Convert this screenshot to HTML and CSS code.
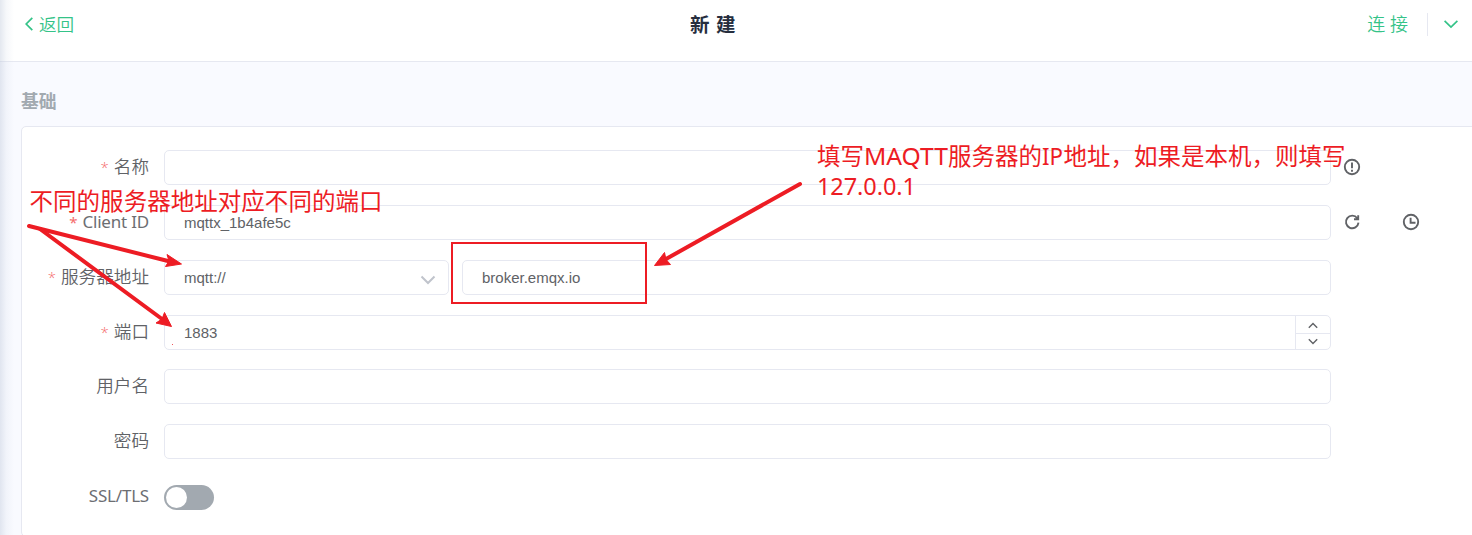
FILE: index.html
```
<!DOCTYPE html>
<html lang="zh-CN">
<head>
<meta charset="utf-8">
<title>新建</title>
<link rel="stylesheet" href="styles.css">
</head>
<body>
<div class="page">
  <header class="topbar">
    <a class="back"><svg width="10" height="16" viewBox="0 0 10 16"><path d="M8.3 1.8 2.2 8l6.1 6.2"/></svg><span>返回</span></a>
    <h1 class="title">新 建</h1>
    <div class="actions">
      <a class="connect">连 接</a>
      <span class="divider"></span>
      <svg width="16" height="10" viewBox="0 0 16 10"><path d="M1.6 1.8 8 8l6.4-6.2"/></svg>
    </div>
  </header>
  <main class="content">
    <h2 class="section">基础</h2>
    <form class="card">
      <div class="row">
        <label class="label required">名称</label>
        <div class="field"></div>
        <svg class="icon" width="18" height="18" viewBox="0 0 18 18"><circle cx="9" cy="9" r="7.2"/><path d="M9 4.500v5.800M9 11.800v1.900"/></svg>
      </div>
      <div class="row">
        <label class="label required latin">Client ID</label>
        <div class="field">mqttx_1b4afe5c</div>
        <svg class="icon" width="18" height="18" viewBox="0 0 18 18"><path d="M14.300 5.200A6.300 6.300 0 1 0 15.500 9.700M15.200 2.200v4h-4.200"/></svg>
        <svg class="icon clock" width="18" height="18" viewBox="0 0 18 18"><circle cx="9" cy="9" r="7.2"/><path d="M8.600 4.800v4.900h4.900"/></svg>
      </div>
      <div class="row">
        <label class="label required">服务器地址</label>
        <div class="field select"><span>mqtt://</span><svg width="16" height="10" viewBox="0 0 16 10"><path d="M1.500 1.500 8 8l6.500-6.500"/></svg></div>
        <div class="field host">broker.emqx.io</div>
      </div>
      <div class="row">
        <label class="label required">端口</label>
        <div class="field number"><span>1883</span>
          <div class="stepper">
            <div class="step"><svg width="10" height="7" viewBox="0 0 10 7"><path d="M.8 5.700 5 1.500l4.200 4.200"/></svg></div>
            <div class="step"><svg width="10" height="7" viewBox="0 0 10 7"><path d="M.8 1.200 5 5.400l4.200-4.200"/></svg></div>
          </div>
        </div>
      </div>
      <div class="row tight">
        <label class="label">用户名</label>
        <div class="field"></div>
      </div>
      <div class="row">
        <label class="label">密码</label>
        <div class="field"></div>
      </div>
      <div class="row">
        <label class="label latin">SSL/TLS</label>
        <div class="switch"><span class="knob"></span></div>
      </div>
    </form>
  </main>
  <div class="edge"></div>
  <svg class="notes" width="1472" height="535" viewBox="0 0 1472 535">
    <g class="lines">
      <path d="M29 226 168 261"/>
      <path d="M40 229 162 319"/>
      <path d="M800 184 666 259"/>
    </g>
    <g class="heads">
      <path d="M181.500 264 165.500 266.500 169 261 167 254.500z"/>
      <path d="M171.500 326.500 156 323 162 319 164.500 312.500z"/>
      <path d="M654.500 265.500 664.500 252.500 666 259.500 670.500 264.500z"/>
    </g>
    <rect class="frame" x="452" y="243" width="194" height="60"/>
    <circle class="speck" cx="172.500" cy="344.500" r=".5"/>
    <text x="29.500" y="210" textLength="353">不同的服务器地址对应不同的端口</text>
    <text y="164.500"><tspan x="817">填写</tspan><tspan x="864" textLength="84" lengthAdjust="spacingAndGlyphs">MAQTT</tspan><tspan x="948">服务器的</tspan><tspan x="1042" textLength="21" lengthAdjust="spacingAndGlyphs">IP</tspan><tspan x="1063.500">地址，如果是本机，则填写</tspan></text>
    <text x="817" y="194.500" textLength="99">127.0.0.1</text>
  </svg>
</div>
</body>
</html>
```
FILE: styles.css
```
* { box-sizing: border-box; }
body { margin: 0; }
svg { display: block; flex: none; fill: none; }
.page {
  position: relative;
  width: 1472px;
  height: 535px;
  overflow: hidden;
  background: #f9faff;
  color: #606266;
  font-family: "Open Sans", "Noto Sans CJK SC", sans-serif;
  font-size: 17.6px;
}
.topbar {
  display: grid;
  grid-template-columns: 666px auto 1fr;
  align-items: start;
  height: 62px;
  padding: 11px 13px 0 24px;
  border-bottom: 1px solid #e6e8f1;
  background: #fff;
  line-height: 26px;
}
.back, .actions { display: flex; align-items: center; color: #34c388; font-weight: 350; }
.back { gap: 5px; }
.back svg, .actions svg { stroke: #34c388; stroke-width: 1.7; }
.title { margin: 1px 0 0; color: #262e3e; font-size: 19.5px; word-spacing: 1.5px; line-height: 26px; font-weight: 700; }
.actions { justify-content: flex-end; }
.connect { font-size: 18px; }
.divider { width: 1px; height: 23px; margin: 0 15px 0 19px; background: #e6e8f1; }
.content { padding: 25px 0 0 21px; }
.section { margin: 0; height: 39px; color: #a2a9b0; font-size: 17.8px; line-height: 28px; font-weight: 700; }
.card {
  display: flex;
  flex-direction: column;
  gap: 20px;
  width: 1480px;
  height: 411px;
  margin: 0;
  padding: 23px 0 0 12px;
  border: 1px solid #e6e8f1;
  border-radius: 5px;
  background: #fff;
}
.row { display: flex; align-items: center; height: 35px; flex: none; }
.tight { margin-top: -1px; }
.label { width: 115px; margin-right: 15px; text-align: right; line-height: 33px; padding-bottom: 3px; font-weight: 350; white-space: nowrap; }
.label.required { padding-bottom: 1px; }
.latin { font-family: "Noto Sans", sans-serif; font-size: 17px; letter-spacing: -.2px; font-weight: 400; color: #6c6e72; }
.required::before { content: "*"; margin-right: 5px; color: #f56c6c; font-size: 15px; letter-spacing: 0; }
.field {
  display: flex;
  align-items: center;
  justify-content: space-between;
  width: 1167px;
  height: 35px;
  padding-left: 19px;
  border: 1px solid #e6e8f1;
  border-radius: 5px;
  font: 15px "Liberation Sans", sans-serif;
}
.select { width: 285px; padding-right: 12px; }
.select svg { margin-top: 4px; stroke: #c0c4cc; stroke-width: 2; }
.host { width: 869px; margin-left: 13px; }
.stepper { display: grid; grid-template-rows: 1fr 1fr; width: 35px; height: 33px; border-left: 1px solid #e6e8f1; }
.step { display: grid; place-items: center; }
.step:first-child { padding-top: 2px; }
.step + .step { border-top: 1px solid #e6e8f1; }
.step svg { stroke: #606266; stroke-width: 1.4; }
.icon { margin: -2px 0 0 12px; stroke: #606266; stroke-width: 1.9; }
.clock { margin-left: 41px; }
.switch { width: 50px; height: 25px; margin-top: 1px; padding: 2px; border-radius: 13px; background: #a2a9b0; }
.knob { display: block; width: 21px; height: 21px; border-radius: 50%; background: #fff; }
.edge {
  position: absolute;
  inset: 0 auto 0 0;
  width: 14px;
  background: linear-gradient(to right, rgba(190,200,218,.42), rgba(210,218,232,.2) 45%, rgba(230,235,242,0));
}
.notes { position: absolute; left: 0; top: 0; }
.notes text { fill: #ed1c24; font-size: 23.5px; font-family: "Noto Sans", "Noto Sans CJK SC", sans-serif; }
.lines { stroke: #ed1c24; stroke-width: 4; stroke-linecap: round; }
.heads { fill: #ed1c24; stroke: #ed1c24; stroke-width: 1; }
.frame { stroke: #ed1c24; stroke-width: 2; }
.speck { fill: #ed1c24; }
```
